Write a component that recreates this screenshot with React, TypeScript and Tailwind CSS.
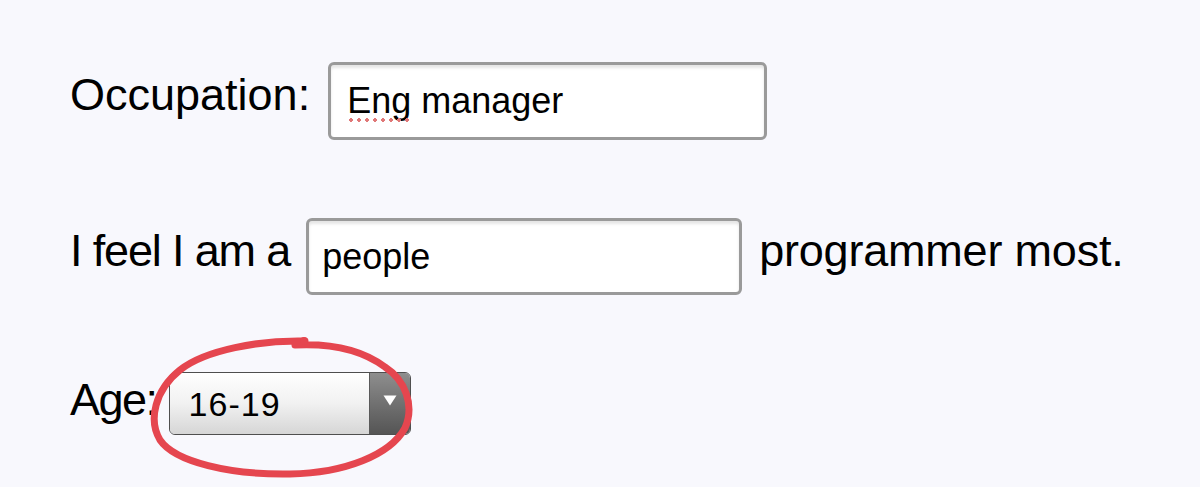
export default function App() {
  return (
    <div className="relative w-[1200px] h-[487px] overflow-hidden bg-[#f8f8fd] text-black font-['Liberation_Sans',Arial,sans-serif]">
      <div className="flex flex-col pl-[70px] pt-[62px]">
        {/* Row 1 */}
        <div className="flex items-center h-[78px]">
          <span className="text-[45px] leading-none mb-[13px] mr-[18px] whitespace-nowrap">Occupation:</span>
          <div className="flex items-center w-[439px] h-[78px] border-[3px] border-[#9a9a9a] rounded-[6px] bg-white shadow-[inset_0_3px_3px_rgba(0,0,0,0.10)] pl-[16px] text-[36px] leading-none whitespace-nowrap">
            <span className="relative">
              Eng
              <span className="absolute left-0 right-0 top-full -mt-[1px] h-[4px] bg-[radial-gradient(circle,#e07878_1.6px,transparent_1.9px)] bg-[length:8px_4px]" />
            </span>
            <span>&nbsp;manager</span>
          </div>
        </div>

        {/* Row 2 */}
        <div className="flex items-center h-[77px] mt-[78px]">
          <span className="text-[45px] leading-none tracking-[-1.15px] mb-[12px] mr-[16px] whitespace-nowrap">I feel I am a</span>
          <div className="flex items-center w-[436px] h-[77px] border-[3px] border-[#9a9a9a] rounded-[6px] bg-white shadow-[inset_0_3px_3px_rgba(0,0,0,0.10)] pl-[13px] text-[36px] leading-none whitespace-nowrap">
            people
          </div>
          <span className="text-[45px] leading-none tracking-[-0.2px] mb-[12px] ml-[17px] whitespace-nowrap">programmer most.</span>
        </div>

        {/* Row 3 */}
        <div className="flex items-center h-[63px] mt-[77px]">
          <span className="text-[45px] leading-none tracking-[-1.5px] mb-[8px] mr-[12px] whitespace-nowrap">Age:</span>
          <div className="flex w-[242px] h-[63px] border-[1.5px] border-[#4f4f4f] rounded-[6px] overflow-hidden">
            <div className="flex-1 flex items-center pl-[19px] bg-gradient-to-b from-[#ffffff] via-[#f1f1f1] to-[#d6d6d6] text-[34px] tracking-[1px] leading-none">
              16-19
            </div>
            <div className="w-[41px] flex items-center justify-center border-l border-[#5a5a5a] bg-gradient-to-b from-[#8e8e8e] to-[#555555]">
              <svg width="14" height="11" viewBox="0 0 14 11" className="-mt-[6px]">
                <path d="M0.5 0.5 H13.5 L7 10.5 Z" fill="#ffffff" />
              </svg>
            </div>
          </div>
        </div>
      </div>

      {/* red hand-drawn annotation */}
      <svg className="absolute inset-0 pointer-events-none" width="1200" height="487" viewBox="0 0 1200 487">
        <path
          d="M 305 341 C 260 340, 205 350, 180 370 C 155 390, 148 420, 160 440 C 175 462, 230 475, 290 474 C 345 473, 390 455, 405 428 C 415 405, 405 380, 385 367 C 365 352, 335 343, 295 345"
          fill="none"
          stroke="#e5464f"
          strokeWidth="7"
          strokeLinecap="round"
          strokeLinejoin="round"
        />
        <circle cx="304" cy="341" r="4" fill="#e5464f" />
      </svg>
    </div>
  );
}
